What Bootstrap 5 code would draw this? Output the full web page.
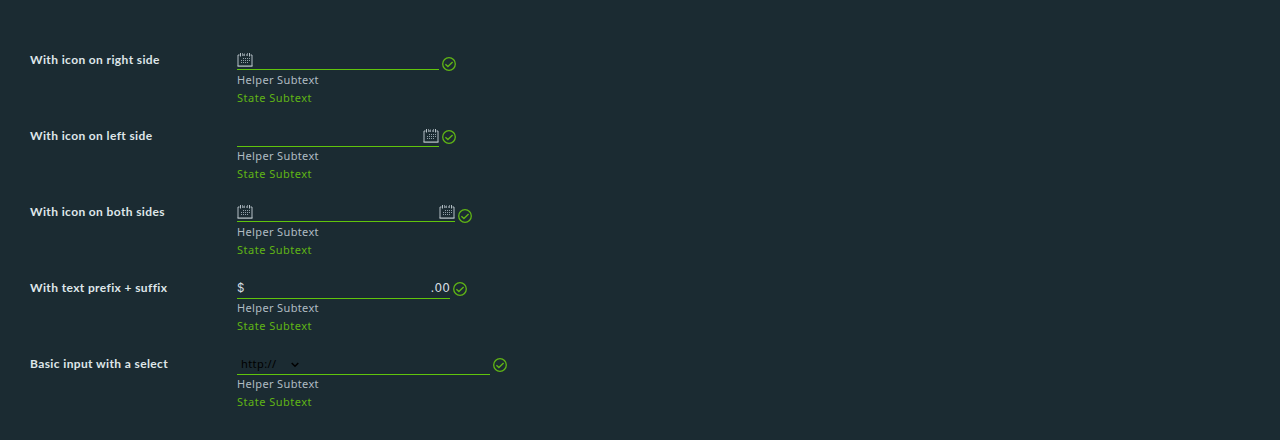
<!DOCTYPE html>
<html lang="en">
<head>
<meta charset="utf-8">
<meta name="viewport" content="width=device-width, initial-scale=1">
<title>Input groups</title>
<link href="https://cdn.jsdelivr.net/npm/bootstrap@5.3.0/dist/css/bootstrap.min.css" rel="stylesheet">
<style>
body{background:#1b2b32;color:#e3eaed;font-family:Inter,"Noto Sans",sans-serif;height:440px;overflow:hidden}
.form-rows{padding:48px 30px 0}
.field-row{height:76px}
.field-label{width:207px;flex:none;font-family:Lato,sans-serif;font-size:12px;font-weight:700;line-height:24px;letter-spacing:.38px;color:#dfe6e9}
.field-line{height:23px;border-bottom:1px solid #60c40c;font-size:13px;line-height:24px;color:#d5dde1}
.field-line.short{height:22px}
.field-top{height:23px}
.w-a{width:202px}.w-b{width:218px}.w-c{width:213px}.w-d{width:253px}
.cal{width:16px;height:16px;margin-top:4px;flex:none}
.valid-mark{width:14px;height:14px;margin:6px 0 0 3px;flex:none}
.short + .valid-mark{margin-top:9px}
.helper{font:11px/18px "Noto Sans",sans-serif;letter-spacing:.36px;color:#b0bcc3}
.state{color:#60b515;letter-spacing:.5px}
.affix{font-size:11.5px}
.affix.cents{font-family:"DejaVu Sans",sans-serif;font-size:12px;letter-spacing:.1px}
.scheme{color:#000;font:11px/24px "Noto Sans",sans-serif;letter-spacing:.42px;padding-left:4px}
.scheme svg{width:8px;height:6px;margin:10px 0 0 14px}
</style>
</head>
<body>
<svg class="d-none" aria-hidden="true">
<symbol id="calendar" viewBox="0 0 16 16"><path d="M2.5 3H1v11M15 14V3h-1.5M6 3h1M9 3h1" fill="none" stroke="#b5c0c6"/><path d="M.5 14.1h15" stroke="#c0cace" stroke-width="1.2"/><path d="M3.5 1v3.5M12.5 1v3.5" stroke="#b5c0c6"/><path d="M5.5 1v3M7.5 1.5v2.5M10.5 1v3" stroke="#9aa7ae" stroke-width=".8"/><path d="M6 6.5h7M4 8.5h9M4 10.5h7" stroke="#91a0a8" stroke-dasharray="1 1"/></symbol>
<symbol id="check" viewBox="0 0 14 14"><circle cx="7" cy="7" r="6.3" fill="none" stroke="#60b515" stroke-width="1.3"/><path d="M3.4 7.2 5.9 9.6l4.7-4.6" fill="none" stroke="#60b515" stroke-width="1.4"/></symbol>
</svg>
<form class="form-rows">
<div class="field-row d-flex"><label class="field-label">With icon on right side</label><div><div class="field-top d-flex"><div class="field-line short w-a d-flex"><svg class="cal"><use href="#calendar"/></svg></div><svg class="valid-mark"><use href="#check"/></svg></div><div class="helper">Helper Subtext</div><div class="helper state">State Subtext</div></div></div>
<div class="field-row d-flex"><label class="field-label">With icon on left side</label><div><div class="field-top d-flex"><div class="field-line w-a d-flex justify-content-end"><svg class="cal"><use href="#calendar"/></svg></div><svg class="valid-mark"><use href="#check"/></svg></div><div class="helper">Helper Subtext</div><div class="helper state">State Subtext</div></div></div>
<div class="field-row d-flex"><label class="field-label">With icon on both sides</label><div><div class="field-top d-flex"><div class="field-line short w-b d-flex justify-content-between"><svg class="cal"><use href="#calendar"/></svg><svg class="cal"><use href="#calendar"/></svg></div><svg class="valid-mark"><use href="#check"/></svg></div><div class="helper">Helper Subtext</div><div class="helper state">State Subtext</div></div></div>
<div class="field-row d-flex"><label class="field-label">With text prefix + suffix</label><div><div class="field-top d-flex"><div class="field-line w-c d-flex justify-content-between"><span class="affix">$</span><span class="affix cents">.00</span></div><svg class="valid-mark"><use href="#check"/></svg></div><div class="helper">Helper Subtext</div><div class="helper state">State Subtext</div></div></div>
<div class="field-row d-flex"><label class="field-label">Basic input with a select</label><div><div class="field-top d-flex"><div class="field-line w-d"><div class="scheme d-flex"><span>http://</span><svg viewBox="0 0 8 6"><path d="m.7 1 3.3 3.3L7.3 1" fill="none" stroke="#000" stroke-width="1.5"/></svg></div></div><svg class="valid-mark"><use href="#check"/></svg></div><div class="helper">Helper Subtext</div><div class="helper state">State Subtext</div></div></div>
</form>
<script src="https://cdn.jsdelivr.net/npm/bootstrap@5.3.0/dist/js/bootstrap.bundle.min.js"></script>
</body>
</html>
